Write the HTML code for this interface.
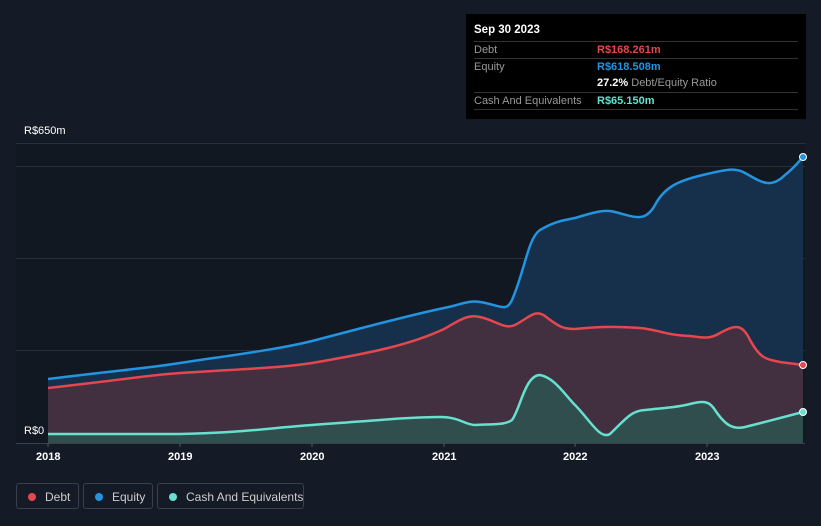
<!DOCTYPE html><html><head><style>
body{margin:0;width:821px;height:526px;background:#151b26;font-family:"Liberation Sans",sans-serif;overflow:hidden;position:relative}
.tt{position:absolute;left:466px;top:14px;width:340px;height:105px;background:#000;color:#fff;font-size:11px}
.tt .h{position:absolute;left:8px;top:10px;font-weight:bold;font-size:11.5px}
.row{position:absolute;left:8px;width:324px;border-top:1px solid #333;height:17px;line-height:17px}
.row .l{position:absolute;left:0;color:#999}.row .v{position:absolute;left:123px;font-weight:bold;white-space:nowrap}
.lg{position:absolute;top:483px;height:26px;border:1px solid #3a404b;border-radius:3px;color:#ccc;font-size:12px;line-height:26px;box-sizing:border-box;white-space:nowrap}
.lg i{position:absolute;left:11px;top:9px;width:8px;height:8px;border-radius:50%}
.lg span{position:absolute;left:28px}
.ax{position:absolute;top:451px;color:#fff;font-size:11px;font-weight:bold}
</style></head><body>
<svg width="821" height="526" style="position:absolute;left:0;top:0">
<rect x="16" y="143" width="789" height="300" fill="#121821"/>
<g stroke="#2a303a" stroke-width="1"><line x1="16" x2="805" y1="143.5" y2="143.5"/><line x1="16" x2="805" y1="166.5" y2="166.5"/><line x1="16" x2="805" y1="258.5" y2="258.5"/><line x1="16" x2="805" y1="350.5" y2="350.5"/><line x1="16" x2="805" y1="443.5" y2="443.5" stroke="#3a414c"/></g>
<path d="M48,379 C120,370 150,368 180,363 C240,354 280,349 312,341 C370,326 410,315 444,308 C460,305 468,300 480,302 C500,305 506,313 512,300 C525,270 528,238 540,230 C555,221 565,220 575,218 C595,212 605,209 615,212 C635,217 645,223 655,205 C665,186 680,180 707,174 C725,170 735,167 745,173 C760,181 770,190 785,175 C795,167 800,160 803,157 L803,443 L48,443 Z" fill="#173250" opacity="0.9"/>
<path d="M48,388 C120,380 150,375 180,373 C240,369 280,368 312,363 C370,353 410,345 444,329 C460,320 468,314 480,317 C495,320 505,330 515,325 C530,317 535,309 545,316 C560,328 565,329 575,329 C595,327 610,326 640,328 C660,330 665,335 690,336 C705,338 710,339 720,333 C735,325 742,323 750,340 C760,358 765,359 780,362 L803,365 L803,443 L48,443 Z" fill="#44303f" opacity="0.95"/>
<path d="M48,434 L180,434 C240,433 270,428 312,425 C370,421 410,417 440,417 C460,417 465,425 475,425 C495,424 505,425 512,420 C520,410 525,375 540,375 C555,378 565,395 575,405 C590,420 600,440 610,434 C625,420 630,411 645,410 C660,408 675,408 690,404 C705,400 710,402 715,410 C725,425 733,430 745,427 C765,422 780,418 803,412 L803,443 L48,443 Z" fill="#2f5250" opacity="0.9"/>
<path d="M48,379 C120,370 150,368 180,363 C240,354 280,349 312,341 C370,326 410,315 444,308 C460,305 468,300 480,302 C500,305 506,313 512,300 C525,270 528,238 540,230 C555,221 565,220 575,218 C595,212 605,209 615,212 C635,217 645,223 655,205 C665,186 680,180 707,174 C725,170 735,167 745,173 C760,181 770,190 785,175 C795,167 800,160 803,157" fill="none" stroke="#2394df" stroke-width="2.5"/>
<path d="M48,388 C120,380 150,375 180,373 C240,369 280,368 312,363 C370,353 410,345 444,329 C460,320 468,314 480,317 C495,320 505,330 515,325 C530,317 535,309 545,316 C560,328 565,329 575,329 C595,327 610,326 640,328 C660,330 665,335 690,336 C705,338 710,339 720,333 C735,325 742,323 750,340 C760,358 765,359 780,362 L803,365" fill="none" stroke="#e5474e" stroke-width="2.5"/>
<path d="M48,434 L180,434 C240,433 270,428 312,425 C370,421 410,417 440,417 C460,417 465,425 475,425 C495,424 505,425 512,420 C520,410 525,375 540,375 C555,378 565,395 575,405 C590,420 600,440 610,434 C625,420 630,411 645,410 C660,408 675,408 690,404 C705,400 710,402 715,410 C725,425 733,430 745,427 C765,422 780,418 803,412" fill="none" stroke="#67e0cf" stroke-width="2.5"/>
<circle cx="803" cy="157" r="3.5" fill="#2394df" stroke="#fff" stroke-width="1"/>
<circle cx="803" cy="365" r="3.5" fill="#e5474e" stroke="#fff" stroke-width="1"/>
<circle cx="803" cy="412" r="3.5" fill="#67e0cf" stroke="#fff" stroke-width="1"/>
<g stroke="#555" ><line x1="48" x2="48" y1="443" y2="447"/><line x1="180" x2="180" y1="443" y2="447"/><line x1="312" x2="312" y1="443" y2="447"/><line x1="444" x2="444" y1="443" y2="447"/><line x1="575" x2="575" y1="443" y2="447"/><line x1="707" x2="707" y1="443" y2="447"/></g>
</svg>
<div style="position:absolute;left:24px;top:125px;color:#fff;font-size:11px">R$650m</div>
<div style="position:absolute;left:24px;top:425px;color:#fff;font-size:11px">R$0</div>
<div class="ax" style="left:36px">2018</div><div class="ax" style="left:168px">2019</div><div class="ax" style="left:300px">2020</div><div class="ax" style="left:432px">2021</div><div class="ax" style="left:563px">2022</div><div class="ax" style="left:695px">2023</div>
<div class="tt"><div class="h">Sep 30 2023</div>
<div class="row" style="top:27px"><span class="l">Debt</span><span class="v" style="color:#e5474e">R$168.261m</span></div>
<div class="row" style="top:44px"><span class="l">Equity</span><span class="v" style="color:#2394df">R$618.508m</span></div>
<div class="row" style="top:61px;border-top:none"><span class="v" style="color:#fff">27.2% <span style="color:#999;font-weight:normal">Debt/Equity Ratio</span></span></div>
<div class="row" style="top:78px"><span class="l">Cash And Equivalents</span><span class="v" style="color:#67e0cf">R$65.150m</span></div>
<div class="row" style="top:95px;height:0"></div>
</div>
<div class="lg" style="left:16px;width:63px"><i style="background:#e5474e"></i><span>Debt</span></div>
<div class="lg" style="left:83px;width:70px"><i style="background:#2394df"></i><span>Equity</span></div>
<div class="lg" style="left:157px;width:147px"><i style="background:#67e0cf"></i><span>Cash And Equivalents</span></div>
</body></html>
